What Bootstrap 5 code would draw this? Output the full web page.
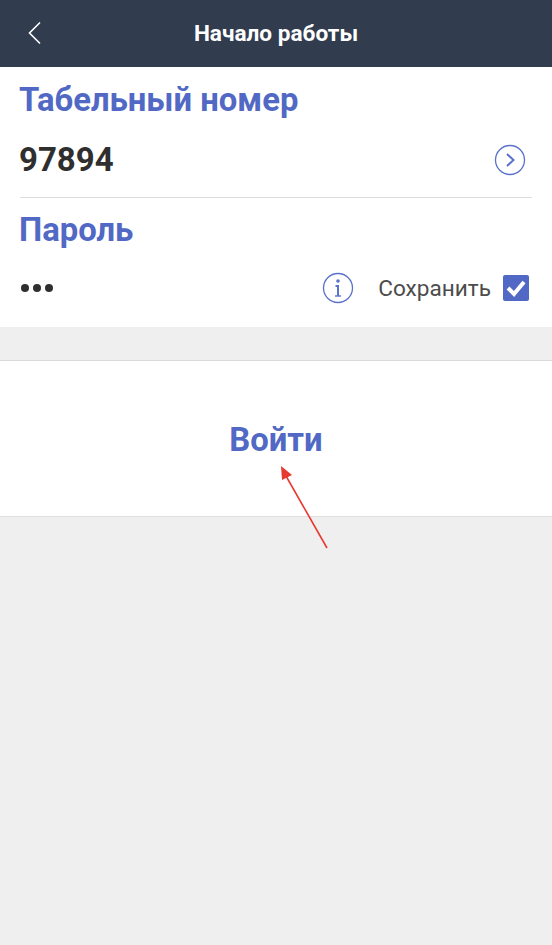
<!DOCTYPE html>
<html lang="ru">
<head>
  <meta charset="UTF-8" />
  <meta name="viewport" content="width=device-width, initial-scale=1.0">
  <title>Начало работы</title>
  <link href="https://cdn.jsdelivr.net/npm/bootstrap@5.3.3/dist/css/bootstrap.min.css" rel="stylesheet" />
  <style>
    body {
      background: #efefef;
      font-family: Roboto, "Liberation Sans", sans-serif;
      min-height: 945px;
      position: relative;
    }

    .top-bar {
      background: #323c4f;
      height: 67px;
      color: #fff;
      position: relative;
    }

    .top-title {
      font-size: 22.6px;
      font-weight: 700;
      line-height: 67px;
    }

    .back-icon {
      position: absolute;
      left: 26px;
      top: 20px;
    }

    .form-panel {
      background: #fff;
      height: 260px;
      padding: 0 20px;
    }

    .field-label {
      color: #5169c4;
      font-size: 32.8px;
      font-weight: 700;
      line-height: 36px;
      margin-left: -1px;
    }

    .id-block {
      height: 131px;
      padding-top: 15px;
      border-bottom: 1px solid #dedede;
    }

    .id-value {
      color: #2f2f2f;
      font-size: 33px;
      font-weight: 700;
      line-height: 40px;
      margin-left: -1px;
    }

    .id-row {
      margin-top: 22px;
      padding-right: 6px;
    }

    .pass-block {
      padding-top: 14px;
    }

    .pass-row {
      margin-top: 20px;
      padding-right: 3px;
      height: 40px;
    }

    .save-label {
      color: #4c4c4c;
      font-size: 22.6px;
      line-height: 40px;
      padding-top: 1px;
      margin-left: 24px;
      margin-right: 12px;
    }

    .save-box {
      width: 26px;
      height: 26px;
      margin-top: -1px;
      background: #5169c4;
      border-radius: 2px;
    }

    .login-panel {
      background: #fff;
      height: 157px;
      margin-top: 33px;
      border-top: 1px solid #d9d9d9;
      border-bottom: 1px solid #dedede;
    }

    .login-text {
      color: #5169c4;
      font-size: 32.8px;
      font-weight: 700;
      line-height: 158px;
    }

    .hint-arrow {
      position: absolute;
      left: 270px;
      top: 460px;
    }
  </style>
</head>
<body>

  <div class="top-bar text-center">
    <svg class="back-icon" width="18" height="26" viewBox="0 0 18 26" fill="none" stroke="#fff" stroke-width="1.6">
      <path d="M14 2.5 L3.5 13 L14 23.5" />
    </svg>
    <div class="top-title">Начало работы</div>
  </div>

  <div class="form-panel">
    <div class="id-block">
      <div class="field-label">Табельный номер</div>
      <div class="id-row d-flex justify-content-between align-items-center">
        <div class="id-value">97894</div>
        <svg width="32" height="32" viewBox="0 0 32 32" fill="none" stroke="#5a72cc">
          <circle cx="16" cy="16" r="14.5" stroke-width="1.3" />
          <path d="M13 10 L19.5 16 L13 22" stroke-width="2" />
        </svg>
      </div>
    </div>

    <div class="pass-block">
      <div class="field-label">Пароль</div>
      <div class="pass-row d-flex align-items-center">
        <svg width="35" height="12" viewBox="0 0 35 12" fill="#2f2f2f">
          <circle cx="5" cy="6" r="4" />
          <circle cx="17" cy="6" r="4" />
          <circle cx="29" cy="6" r="4" />
        </svg>
        <svg class="ms-auto" width="32" height="32" viewBox="0 0 32 32" fill="none" stroke="#5a72cc">
          <circle cx="16" cy="16" r="14.5" stroke-width="1.3" />
          <circle cx="16" cy="9" r="1.8" fill="#5a72cc" stroke="none" />
          <path d="M13.5 14 H16 V24" stroke-width="2" />
          <path d="M13 24 H19" stroke-width="1.4" />
        </svg>
        <span class="save-label">Сохранить</span>
        <div class="save-box d-flex align-items-center justify-content-center">
          <svg width="20" height="18" viewBox="0 0 20 18" fill="none" stroke="#fff" stroke-width="4">
            <path d="M2 9 L8 15 L18 3" />
          </svg>
        </div>
      </div>
    </div>
  </div>

  <div class="login-panel text-center">
    <div class="login-text">Войти</div>
  </div>

  <svg class="hint-arrow" width="64" height="92" viewBox="0 0 64 92">
    <path d="M57 88 L16 16" stroke="#e8392f" stroke-width="1.6" fill="none" />
    <path d="M11 6 L22 15 L12 20 Z" fill="#e8392f" />
  </svg>

  <script src="https://cdn.jsdelivr.net/npm/bootstrap@5.3.3/dist/js/bootstrap.bundle.min.js"></script>
</body>
</html>
